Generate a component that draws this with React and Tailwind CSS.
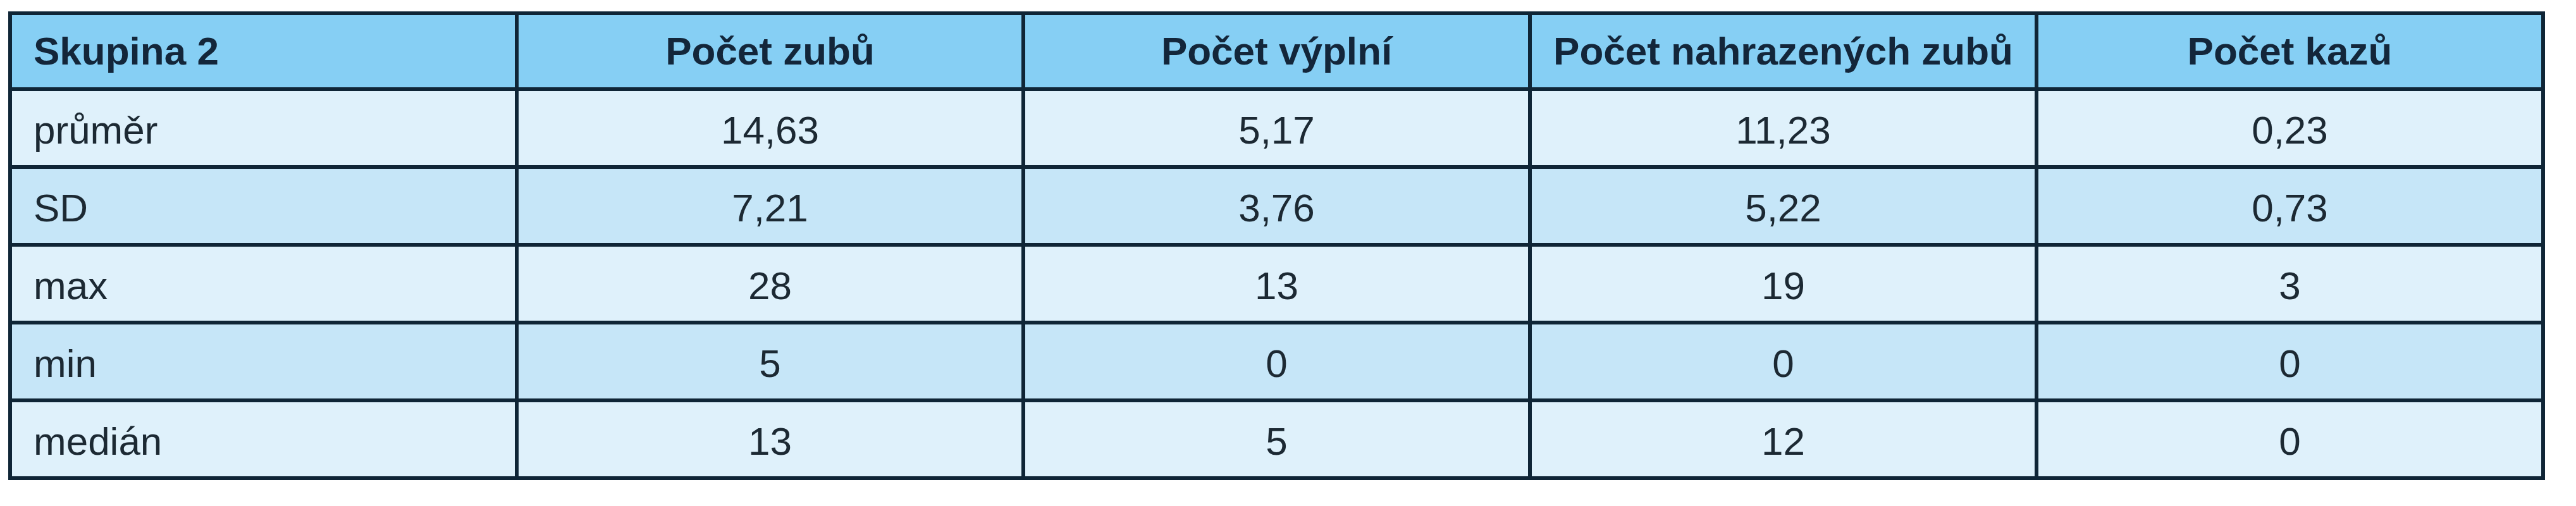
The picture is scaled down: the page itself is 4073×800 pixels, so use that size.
const headers = ['Skupina 2', 'Počet zubů', 'Počet výplní', 'Počet nahrazených zubů', 'Počet kazů']

const rows = [
  ['průměr', '14,63', '5,17', '11,23', '0,23'],
  ['SD', '7,21', '3,76', '5,22', '0,73'],
  ['max', '28', '13', '19', '3'],
  ['min', '5', '0', '0', '0'],
  ['medián', '13', '5', '12', '0'],
]

export default function App() {
  return (
    <div className="w-[4073px] h-[800px] bg-white pt-[18px] pl-[13px]" style={{ fontFamily: '"Liberation Sans", Arial, sans-serif' }}>
      <table className="w-[4011px] border-collapse table-fixed text-[62px] leading-none text-[#1c2933]">
        <thead>
          <tr className="bg-[#86cff4]">
            {headers.map((h, i) => (
              <th
                key={h}
                className={`h-[120px] border-[6px] border-[#0f2536] font-bold text-[#13263a] ${i === 0 ? 'text-left pl-[34px]' : 'text-center'}`}
              >
                {h}
              </th>
            ))}
          </tr>
        </thead>
        <tbody>
          {rows.map((row, r) => (
            <tr key={row[0]} className={r % 2 === 0 ? 'bg-[#dff1fb]' : 'bg-[#c6e6f8]'}>
              {row.map((cell, i) => (
                <td
                  key={i}
                  className={`h-[123px] pt-[6px] border-[6px] border-[#0f2536] font-normal ${i === 0 ? 'text-left pl-[34px]' : 'text-center'}`}
                >
                  {cell}
                </td>
              ))}
            </tr>
          ))}
        </tbody>
      </table>
    </div>
  )
}
